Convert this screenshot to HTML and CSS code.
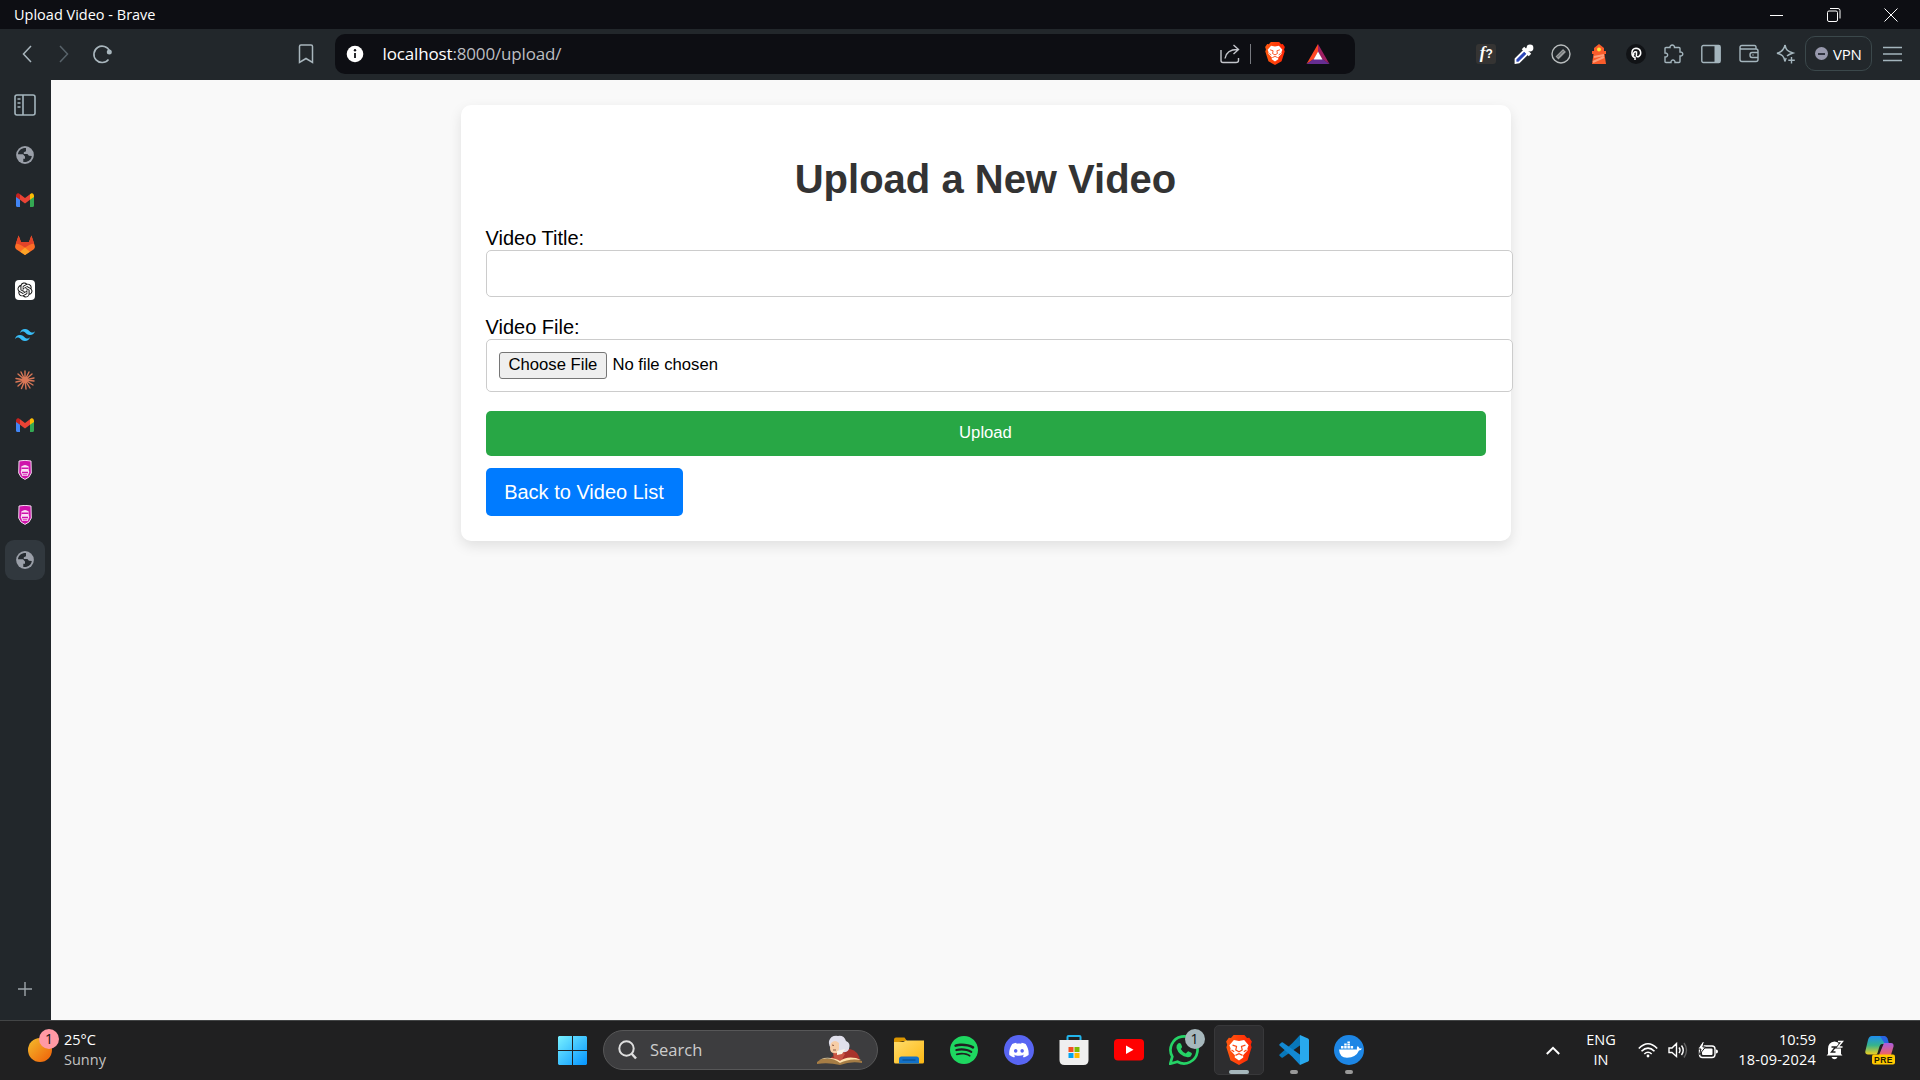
FILE: index.html
```html
<!DOCTYPE html>
<html lang="en">
<head>
<meta charset="utf-8">
<title>Upload Video</title>
<link rel="stylesheet" href="styles.css">
</head>
<body>
<svg class="defs" aria-hidden="true">
  <defs>
    <linearGradient id="g-sun" x1="0" y1="0" x2="1" y2="1"><stop offset="0" stop-color="#f3bd2c"/><stop offset=".8" stop-color="#f0700f"/></linearGradient>
    <linearGradient id="g-win" x1="0" y1="0" x2="30" y2="30" gradientUnits="userSpaceOnUse"><stop offset="0" stop-color="#79f1ff"/><stop offset="1" stop-color="#0091ff"/></linearGradient>
    <linearGradient id="g-folder" x1="0" y1="0" x2="1" y2="1"><stop offset="0" stop-color="#ffdc6b"/><stop offset="1" stop-color="#fdb813"/></linearGradient>
    <linearGradient id="g-brave" x1="0" y1="0" x2="1" y2="0"><stop offset="0" stop-color="#ff5a10"/><stop offset="1" stop-color="#ff2404"/></linearGradient>
    <linearGradient id="g-cop1" x1="0" y1="0" x2="0" y2="1"><stop offset="0" stop-color="#1e8df0"/><stop offset=".5" stop-color="#35b38c"/><stop offset="1" stop-color="#f1cf1f"/></linearGradient>
    <linearGradient id="g-cop2" x1="0" y1="0" x2="0" y2="1"><stop offset="0" stop-color="#a95de0"/><stop offset="1" stop-color="#f2625f"/></linearGradient>
  </defs>
  <symbol id="globe" viewBox="0 0 18 18"><circle cx="9" cy="9" r="8.900" fill="#9a9fa8"/><path d="M10 2C5.500 1.800 2.200 4.600 2 8.300h5l2 2.200v2.300h-1.700v3.100c4.300.8 8-2 8.500-5.900l-2.900-.3-1.500-1.700H7.800V6.200L10 5.300z" fill="#252b30"/></symbol>
  <symbol id="gmail" viewBox="0 0 18 14"><path d="M0 3v9.800c0 .7.500 1.200 1.200 1.200H4V5z" fill="#4285f4"/><path d="M18 3v9.800c0 .7-.5 1.200-1.200 1.200H14V5z" fill="#34a853"/><path d="M4 1.200 9 5l5-3.800v5.600l-5 3.800-5-3.800z" fill="#ea4335"/><path d="M0 3v1l4 2.800V1.200L3 .5C1.700-.5 0 .6 0 3z" fill="#c5221f"/><path d="M18 3v1l-4 2.800V1.200l1-.7c1.300-1 3 .1 3 2.500z" fill="#fbbc04"/></symbol>
  <symbol id="fox" viewBox="0 0 20 20"><path d="M3.600.6 6 7h8L16.400.6 19.700 10.500c.5 1.700 0 2.900-1.200 3.900L10 20 1.500 14.400C.3 13.400-.2 12.200.3 10.500z" fill="#fc6d26"/><path d="M3.600.6 6 7h8L16.400.6l2.800 8c-3.500.4-6.500 2-9.200 4.200-2.700-2.200-5.700-3.800-9.200-4.200z" fill="#e24329"/><path d="m10 12.500 4.800 4.200L10 20l-4.800-3.300z" fill="#fca326"/></symbol>
  <symbol id="claude" viewBox="0 0 20 20"><g stroke="#d97757" stroke-width="1.400" stroke-linecap="round"><path d="M10 10V1M10 10l4-8M10 10l7-6M10 10l9-2M10 10l9 1M10 10l8 5M10 10l5 8M10 10l1 9M10 10l-3.500 8.500M10 10l-7 6M10 10l-9 2M10 10 1 8.500M10 10 3 4M10 10 6 2"/></g></symbol>
  <symbol id="face" viewBox="0 0 14 20"><path d="M1 1Q7-.3 13 1l.3 12L11 17l-4 2.400L3 17 .7 13z" fill="#cf13ab" stroke="#f2d8ee" stroke-width="1"/><path d="M3.300 6.500Q7 3.500 10.700 6.500V10l.6 2-1.600 4H4.300l-1.600-4 .6-2z" fill="#f9dff4"/><path d="M3.500 8.300h7M4 12.500h6" stroke="#cf13ab" stroke-width="1.500"/><path d="M4.800 14.800h4.400" stroke="#cf13ab" stroke-width=".9"/></symbol>
  <symbol id="brave" viewBox="0 0 24 28"><path d="M7 0h10l2.500 2.800 2-.3L24 6l-1 3 .8 2.500L20 23.500 12 28 4 23.500.2 11.500 1 9 0 6l2.500-3.500 2 .3z" fill="url(#g-brave)"/><path d="m7.200 4.700 4.800.8 4.800-.8L21 9.500l-1.200 3 .3 1.800-4.300 4.500L16 21l-4 2.800L8 21l.2-2.200-4.300-4.500.3-1.800L3 9.500z" fill="#fff"/><path d="m6 9.500 3.700 1.200L9 14l3 1.700 3-1.700-.7-3.300L18 9.500M8.700 19l3.300-1.500 3.300 1.500M5 14l2.500 1.700M19 14l-2.500 1.700" fill="none" stroke="#fb4814" stroke-width="1.100"/></symbol>
</svg>

<header class="titlebar">
  <span class="window-title">Upload Video - Brave</span>
  <div class="window-buttons">
    <svg width="14" height="14"><path d="M0 7.500h13" stroke="#fff"/></svg>
    <svg width="14" height="14" fill="none" stroke="#fff"><rect x=".5" y="3" width="10" height="10.500" rx="1.500"/><path d="M3 .5h8q2 0 2 2v8"/></svg>
    <svg width="14" height="14"><path d="m.5.5 13 13M13.500.5l-13 13" stroke="#fff"/></svg>
  </div>
</header>

<nav class="toolbar">
  <div class="nav-buttons">
    <span><svg width="10" height="18" fill="none" stroke="#a9b6bd" stroke-width="1.500"><path d="M9 1 1.500 9 9 17"/></svg></span>
    <span><svg width="10" height="18" fill="none" stroke="#58636a" stroke-width="1.500"><path d="m1 1 7.500 8L1 17"/></svg></span>
    <span><svg width="20" height="20" fill="none" stroke="#a9b6bd" stroke-width="1.600"><path d="M16.500 15.500A8.200 8.200 0 1 1 17.600 7"/><circle cx="17.300" cy="8" r="1.700" fill="#a9b6bd"/></svg></span>
  </div>
  <svg class="bookmark" width="16" height="20" fill="none" stroke="#a9b6bd" stroke-width="1.500"><path d="M3 1h10q1.500 0 1.500 1.500V18.500L8 14.500l-6.500 4V2.500Q1.500 1 3 1z"/></svg>
  <div class="address">
    <svg width="18" height="18"><circle cx="9" cy="9" r="8.300" fill="#fff"/><path d="M9 8v5" stroke="#101116" stroke-width="1.800"/><circle cx="9" cy="5.200" r="1.200" fill="#101116"/></svg>
    <span class="url"><b>localhost</b>:8000/upload/</span>
    <svg class="share" width="20" height="20" fill="none" stroke="#c3c5cb" stroke-width="1.400"><path d="M1 6v10.500q0 2 2 2h13q2.500 0 2.500-2V14M5 14.500C6 8.500 10 5.500 17.500 5.500M13.500 1l5 4.500-5 4.500"/></svg>
    <i class="divider"></i>
    <svg class="shield" width="20" height="23"><use href="#brave"/></svg>
    <svg class="bat" width="24" height="20"><path d="M12 0v8L8 15l-7.500 5z" fill="#ff4724"/><path d="M12 0v8l4 7 7.500 5z" fill="#9e1f63"/><path d="m.5 20 7-5h9l7 5z" fill="#662d91"/><path d="m12 7.500 4.500 8h-9z" fill="#fff"/></svg>
  </div>
  <div class="extensions">
    <span><i class="fx">f<small>?</small></i></span>
    <span><svg width="20" height="20"><path d="m1.500 15 9-9 3.500 3.500-9 9-3.500.5z" fill="#2d47b8" stroke="#fff" stroke-width="1.800"/><path d="m9 4 7 7M12 7l4.500-4.500" stroke="#fff" stroke-width="3.500"/><circle cx="16" cy="4" r="3.400" fill="#fff"/></svg></span>
    <span><svg width="20" height="20"><circle cx="10" cy="10" r="9" fill="none" stroke="#b8bcbd" stroke-width="1.400"/><path d="m6 14 7.500-7.500" stroke="#9b9d9e" stroke-width="4"/><path d="m6.500 13 6-6" stroke="#555c5f"/></svg></span>
    <span><svg width="16" height="20"><path d="M8 0 13 4v3h2v3h-1.500l1.500 10H1l1.500-10H1V7h2V4z" fill="#fa5c2b"/><path d="m3 13 10-2M2 18l11-5" stroke="#ff9d78" stroke-width="2"/><circle cx="8" cy="5.500" r="2" fill="#ffe83b"/></svg></span>
    <span><svg width="20" height="20"><circle cx="10" cy="10" r="10" fill="#111316"/><path d="M9 16V13.500C5 13 4.500 4.500 10 4.300c5 0 6 5.700 3 8-1.500 1.100-3.300.3-2.500-2V8c-2.500-1-4 2-2.300 3.300" fill="none" stroke="#fff" stroke-width="1.500"/></svg></span>
    <span><svg width="20" height="20" fill="none" stroke="#a4b5bd" stroke-width="1.400"><path d="M2 3.500h4c-.5-3.300 5-3.300 4.500 0H15q1 0 1 1V8c3.700-.5 3.700 4.500 0 4v5.500q0 1-1 1h-4c.3-3.300-4.300-3.300-4 0H2q-1 0-1-1V13c3.500.3 3.500-4.300 0-4V4.500q0-1 1-1z"/></svg></span>
    <span><svg width="20" height="20"><rect x=".8" y="1.500" width="18.400" height="17" rx="1.500" fill="none" stroke="#a4b5bd" stroke-width="1.400"/><path d="M13.500 1.500H19v17h-5.500z" fill="#a4b5bd"/></svg></span>
    <span><svg width="20" height="20" fill="none" stroke="#a4b5bd" stroke-width="1.400"><path d="M17 5V3q0-1.500-1.500-1.500H3Q1 1.500 1 3.500v12q0 2 2 2h14q2 0 2-2V7q0-2-2-2H3Q1 5 1 3.500M19 8.500h-6q-2 0-2 2.500t2 2.500h6M13.500 11h1"/></svg></span>
    <span><svg width="20" height="20" fill="none" stroke="#a4b5bd" stroke-width="1.400"><path d="M9 1c1 5 2.500 6.500 8 8-3 1-5 2-6 3M9 17.500C8 12 6 10.500 1 9.300 6 8 8 6 9 1M9 17.500c.5-1.500.7-2.500 1.200-3.500M15.500 13v6.500M12.300 16.200h6.500"/></svg></span>
  </div>
  <div class="vpn"><i></i>VPN</div>
  <svg class="menu" width="19" height="16"><path d="M0 1.500h19M0 8h19M0 14.500h19" stroke="#a4b5bd" stroke-width="1.400"/></svg>
</nav>

<div class="workspace">
  <aside class="sidebar">
    <span class="tab panel-toggle"><svg width="22" height="22" fill="none" stroke="#a4b5bd" stroke-width="1.600"><rect x="1" y="1" width="20" height="20" rx="2"/><path d="M9 1v20M3.500 5h3M3.500 9h3M3.500 13h3"/></svg></span>
    <span class="tab"><svg width="18" height="18"><use href="#globe"/></svg></span>
    <span class="tab"><svg width="18" height="14"><use href="#gmail"/></svg></span>
    <span class="tab"><svg width="20" height="20"><use href="#fox"/></svg></span>
    <span class="tab"><svg width="20" height="20"><rect width="20" height="20" rx="4" fill="#fff"/><path transform="translate(2.500 2.500) scale(.625)" fill="#111" d="M22.2819 9.8211a5.9847 5.9847 0 0 0-.5157-4.9108 6.0462 6.0462 0 0 0-6.5098-2.9A6.0651 6.0651 0 0 0 4.9807 4.1818a5.9847 5.9847 0 0 0-3.9977 2.9 6.0462 6.0462 0 0 0 .7427 7.0966 5.98 5.98 0 0 0 .511 4.9107 6.051 6.051 0 0 0 6.5146 2.9001A5.9847 5.9847 0 0 0 13.2599 24a6.0557 6.0557 0 0 0 5.7718-4.2058 5.9894 5.9894 0 0 0 3.9977-2.9001 6.0557 6.0557 0 0 0-.7475-7.0729zm-9.022 12.6081a4.4755 4.4755 0 0 1-2.8764-1.0408l.1419-.0804 4.7783-2.7582a.7948.7948 0 0 0 .3927-.6813v-6.7369l2.02 1.1686a.071.071 0 0 1 .038.052v5.5826a4.504 4.504 0 0 1-4.4945 4.4944zm-9.6607-4.1254a4.4708 4.4708 0 0 1-.5346-3.0137l.142.0852 4.783 2.7582a.7712.7712 0 0 0 .7806 0l5.8428-3.3685v2.3324a.0804.0804 0 0 1-.0332.0615L9.74 19.9502a4.4992 4.4992 0 0 1-6.1408-1.6464zM2.3408 7.8956a4.485 4.485 0 0 1 2.3655-1.9728V11.6a.7664.7664 0 0 0 .3879.6765l5.8144 3.3543-2.0201 1.1685a.0757.0757 0 0 1-.071 0l-4.8303-2.7865A4.504 4.504 0 0 1 2.3408 7.872zm16.5963 3.8558L13.1038 8.364 15.1192 7.2a.0757.0757 0 0 1 .071 0l4.8303 2.7913a4.4944 4.4944 0 0 1-.6765 8.1042v-5.6772a.79.79 0 0 0-.407-.667zm2.0107-3.0231l-.142-.0852-4.7735-2.7818a.7759.7759 0 0 0-.7854 0L9.409 9.2297V6.8974a.0662.0662 0 0 1 .0284-.0615l4.8303-2.7866a4.4992 4.4992 0 0 1 6.6802 4.66zM8.3065 12.863l-2.02-1.1638a.0804.0804 0 0 1-.038-.0567V6.0742a4.4992 4.4992 0 0 1 7.3757-3.4537l-.142.0805L8.704 5.459a.7948.7948 0 0 0-.3927.6813zm1.0976-2.3654l2.602-1.4998 2.6069 1.4998v2.9994l-2.5974 1.4997-2.6067-1.4997Z"/></svg></span>
    <span class="tab"><svg width="20" height="20" viewBox="0 0 24 24" fill="#38bdf8"><path d="M12.001 4.800c-3.200 0-5.200 1.600-6 4.800 1.200-1.600 2.600-2.200 4.200-1.800.913.228 1.565.89 2.288 1.624C13.666 10.618 15.027 12 18.001 12c3.200 0 5.200-1.600 6-4.800-1.200 1.600-2.600 2.200-4.200 1.800-.913-.228-1.565-.89-2.288-1.624C16.337 6.182 14.976 4.800 12.001 4.800zM6.001 12c-3.200 0-5.200 1.600-6 4.800 1.200-1.600 2.600-2.200 4.200-1.800.913.228 1.565.89 2.288 1.624 1.177 1.194 2.538 2.576 5.512 2.576 3.200 0 5.200-1.600 6-4.800-1.200 1.600-2.600 2.200-4.200 1.800-.913-.228-1.565-.89-2.288-1.624C10.337 13.382 8.976 12 6.001 12z"/></svg></span>
    <span class="tab"><svg width="20" height="20"><use href="#claude"/></svg></span>
    <span class="tab"><svg width="18" height="14"><use href="#gmail"/></svg></span>
    <span class="tab"><svg width="14" height="20"><use href="#face"/></svg></span>
    <span class="tab"><svg width="14" height="20"><use href="#face"/></svg></span>
    <span class="tab active"><svg width="18" height="18"><use href="#globe"/></svg></span>
    <svg class="new-tab" width="14" height="14"><path d="M7 0v14M0 7h14" stroke="#9da5aa" stroke-width="1.400"/></svg>
  </aside>

  <main class="page">
    <section class="card">
      <h1>Upload a New Video</h1>
      <form>
        <label for="title">Video Title:</label>
        <input class="field" type="text" id="title">
        <label for="file">Video File:</label>
        <input class="field file" type="file" id="file">
        <button class="submit" type="button">Upload</button>
      </form>
      <a class="back" href="#">Back to Video List</a>
    </section>
  </main>
</div>

<footer class="taskbar">
  <div class="weather">
    <div class="sun"><svg width="24" height="24"><circle cx="12" cy="12" r="12" fill="url(#g-sun)"/></svg><span class="badge pink">1</span></div>
    <div class="weather-text"><span>25°C</span><span class="dim">Sunny</span></div>
  </div>
  <div class="apps">
    <svg class="start" width="29" height="29" fill="url(#g-win)"><path d="M1 0h13v14H0V1zM15 0h13l1 1v13H15zM0 15h14v14H1l-1-1zM15 15h14v13l-1 1H15z"/></svg>
    <div class="search">
      <svg width="19" height="20" fill="none" stroke="#dedede" stroke-width="2"><circle cx="8.500" cy="8.500" r="7.200"/><path d="m13.500 13.500 4.500 5" stroke-width="2.500"/></svg>
      <span>Search</span>
      <svg class="reader" width="46" height="32"><path d="M17 22q6-8 16-7 9 2 10 12H13q0-4 4-5z" fill="#a8322b"/><path d="M16 18q7-3 12 2l-5 9q-7-3-7-11z" fill="#c95643"/><path d="M12 7q2-6 9-5 6-1 8 5 5 2 3 8-2 4-7 3-5 3-9-2-5-4-4-9z" fill="#e0dfeb"/><path d="M14 9q4-4 8 0v6q-1 5-5 4-4 0-4-5z" fill="#f6cda6"/><path d="m15 11 2 .5M16 16h3" stroke="#8c5640"/><path d="m20 17 8-2-3 5-5 1z" fill="#f9f4e4"/><path d="M0 28q5-5 10-3h8l5 4 5-3q11-2 17 1v2q-11-2-22 2-12-3-23-1z" fill="#a67d45"/><path d="M2 26q12-4 21 3 9-5 21-3l-5-2q-10-2-16 3-7-4-16-3z" fill="#ffe3ac"/></svg>
    </div>
    <div class="app"><svg width="30" height="27"><path d="M0 2.500Q0 .5 2 .5h8.500L13 4h-3L0 6z" fill="#dc9600"/><path d="M0 5h9l3-1.500h18v21.500q0 1.500-1.500 1.500h-27Q0 26.500 0 25z" fill="url(#g-folder)"/><path d="M5 26.500V22q0-2.500 2.500-2.500h15Q25 19.500 25 22v4.500z" fill="#1271c9"/><path d="M8.500 23h13" stroke="#074981"/></svg></div>
    <div class="app"><svg width="28" height="28" viewBox="0 0 24 24" fill="#1ed760"><path d="M12 0C5.400 0 0 5.400 0 12s5.400 12 12 12 12-5.400 12-12S18.660 0 12 0zm5.521 17.340c-.24.359-.66.480-1.021.240-2.820-1.740-6.360-2.101-10.561-1.141-.418.122-.779-.179-.899-.539-.12-.421.180-.78.540-.9 4.560-1.021 8.520-.6 11.640 1.320.42.180.479.659.301 1.020zm1.440-3.300c-.301.420-.841.600-1.262.300-3.239-1.980-8.159-2.580-11.939-1.380-.479.120-1.020-.12-1.140-.6-.12-.48.120-1.021.600-1.141C9.600 9.900 15 10.561 18.720 12.840c.361.181.540.780.241 1.200zm.12-3.360C15.240 8.400 8.820 8.160 5.160 9.301c-.6.179-1.200-.181-1.380-.721-.18-.601.180-1.200.720-1.381 4.260-1.260 11.280-1.020 15.721 1.621.539.300.719 1.020.419 1.560-.299.421-1.020.599-1.559.300z"/></svg></div>
    <div class="app"><svg width="30" height="30"><circle cx="15" cy="15" r="15" fill="#5865f2"/><path transform="translate(5.200 5.400) scale(.81)" fill="#fff" d="M20.317 4.370a19.800 19.800 0 0 0-4.885-1.515c-.3.400-.5.900-.687 1.287-1.845-.276-3.680-.276-5.487 0-.16-.4-.4-.88-.696-1.287A19.700 19.700 0 0 0 3.677 4.370C.533 9.046-.319 13.580.099 18.058c2.080 1.560 4.070 2.480 6.024 3.086.5-.66.950-1.320 1.310-2.050-.7-.26-1.310-.56-1.922-.998l.442-.34c3.928 1.793 8.180 1.793 12.061 0l.451.342c-.59.420-1.220.720-1.873.970.360.740.770 1.430 1.310 2.076 1.960-.606 3.950-1.520 6.033-3.086.5-5.177-.838-9.674-3.618-13.688zM8.020 15.331c-1.183 0-2.157-1.086-2.157-2.419s.956-2.419 2.157-2.419c1.210 0 2.176 1.095 2.157 2.419 0 1.333-.956 2.419-2.157 2.419zm7.975 0c-1.183 0-2.157-1.086-2.157-2.419s.955-2.419 2.157-2.419c1.210 0 2.176 1.095 2.157 2.419 0 1.333-.946 2.419-2.157 2.419z"/></svg></div>
    <div class="app"><svg width="30" height="30"><path d="M8.500 6V2q0-1 1-1h11q1 0 1 1v4" fill="none" stroke="#22b5ec" stroke-width="2"/><path d="M.5 5h29v20q0 5-5 5h-19q-5 0-5-5z" fill="#efefef"/><path d="M9.500 12h5v5h-5z" fill="#f25022"/><path d="M15.500 12h5v5h-5z" fill="#7fba00"/><path d="M9.500 18h5v5h-5z" fill="#00a4ef"/><path d="M15.500 18h5v5h-5z" fill="#ffb900"/></svg></div>
    <div class="app"><svg width="30" height="22"><rect width="30" height="21.500" rx="4" fill="#f00"/><path d="m12 6.500 7.500 4.300-7.500 4.300z" fill="#fff"/></svg></div>
    <div class="app"><svg width="30" height="30"><path d="m1.300 28.700 2-7A13.500 13.500 0 1 1 8.500 26.800z" fill="none" stroke="#25d366" stroke-width="2.700"/><path d="M9 8.500q2-1.200 3 .5l1 2.500q.2 1-1.200 2.500 1.700 3.200 5 4.500l1.700-1.800q.5-.6 1.300-.2l2.500 1.200q1 .5.400 2-1 2.700-4 2.500Q10 21 7.500 13q-.4-3 1.500-4.500z" fill="#25d366"/></svg><span class="badge gray">1</span></div>
    <div class="app running current"><svg width="26" height="30"><use href="#brave"/></svg></div>
    <div class="app running"><svg width="30" height="30"><path d="m21 0-8 8.500L.5 19.500q-.5.700 0 1.300L2.500 22.500q.7.400 1.400 0L23 9z" fill="#0877b9"/><path d="M2.500 7.500q.7-.4 1.400 0L23 21l-2 9L13 21.500.5 10.500q-.5-.7 0-1.300z" fill="#1389d3"/><path d="m21 0 8 3.500q1 .5 1 1.500v20q0 1-1 1.500L21 30z" fill="#28a9ee"/></svg></div>
    <div class="app running"><svg width="30" height="30"><circle cx="15" cy="15" r="15" fill="#1d86e5"/><path d="M5 14.500h18q-.7-2 .7-3.500 1.500 1 1.800 2.500h2.500q-.8 2-3 2Q22 22.500 13 22.700q-7.500 0-8-8.200z" fill="#fff"/><path d="M7 11h2.500v2.500H7zM10.200 11h2.500v2.500h-2.500zM13.400 11h2.500v2.500h-2.500zM16.600 11h2.500v2.500h-2.500zM10.200 8.500h2.500v2h-2.500zM13.400 8.500h2.500v2h-2.500zM13.400 6.500h2.500v1.500h-2.500z" fill="#fff"/></svg></div>
  </div>
  <div class="tray">
    <svg class="chevron" width="14" height="9" fill="none" stroke="#fff" stroke-width="2"><path d="m.8 8 6.200-6.200L13.200 8"/></svg>
    <div class="lang"><span>ENG</span><span>IN</span></div>
    <svg class="wifi" width="20" height="16" fill="none" stroke="#fff" stroke-width="1.600"><path d="M.8 6.500q9.200-9.500 18.400 0M3.500 9.300q6.500-6.500 13 0M6.300 12q3.700-3.500 7.400 0"/><circle cx="10" cy="14" r="1.400" fill="#fff" stroke="none"/></svg>
    <svg class="sound" width="20" height="17" fill="none" stroke="#fff" stroke-width="1.400"><path d="M1 6h3l4.500-4.500v13L4 10.500H1zM11 5.500q2 2.700 0 5.500M13.500 3.500q3.500 4.700 0 9.500"/><path d="M16 1q5 7 0 14.500" stroke="#626262"/></svg>
    <svg class="battery" width="20" height="17"><rect x="1.500" y="4" width="15.500" height="11.500" rx="3" fill="none" stroke="#fff" stroke-width="1.400"/><rect x="4" y="6.500" width="10.500" height="6.500" rx="1" fill="#fff"/><path d="M18 7.500q2 0 2 2t-2 2z" fill="#fff"/><path d="M5-1-.2 7H3l-1.500 5.500L7.500 5H4.800L6.500-1z" fill="#fff" stroke="#202021"/></svg>
    <div class="clock"><span>10:59</span><span class="date">18-09-2024</span></div>
    <svg class="bell" width="18" height="20"><path d="M2 14V9q0-7 6.500-7.500Q15 2 15 9v5l1.500 1.500H.5z" fill="#fff"/><path d="M5.500 17h6q-1 2.300-3 2.300t-3-2.300z" fill="#fff"/><path d="M5.500 7h4l-4 5h4" fill="none" stroke="#202021" stroke-width="1.400"/><path d="M12 2h4.500L12 7h4.500" fill="none" stroke="#202021" stroke-width="3"/><path d="M12 1.500h4.500L12 7h4.500" fill="none" stroke="#fff" stroke-width="1.400"/></svg>
    <svg class="copilot" width="30" height="30"><path d="M7 1h11q3 0 4 4l1 4h-6q-2 0-3 4l-1.500 5q-.5 1.500-2 1.500H3q-3.500 0-2.500-4L3 5Q4 1 7 1z" fill="url(#g-cop1)"/><path d="M15 1h4q3 0 4 4l1 4h-4z" fill="#2864e3"/><path d="M19 8h7q3 0 2.500 3.500L26 20H14z" fill="url(#g-cop2)"/><rect x="7" y="19.500" width="23" height="10" rx="2" fill="#ffc800"/><text x="18.500" y="27.800" class="pre">PRE</text></svg>
  </div>
</footer>
</body>
</html>
```
FILE: styles.css
```css
* { box-sizing: border-box; }

body {
  margin: 0;
  width: 1920px;
  height: 1080px;
  overflow: hidden;
  display: flex;
  flex-direction: column;
  font-family: "Open Sans", "Noto Sans", sans-serif;
  background: #22272b;
  color: #fff;
}

svg { display: block; flex: none; }
.defs { position: absolute; width: 0; height: 0; }

/* Window title bar */
.titlebar {
  height: 29px;
  flex: none;
  background: #0d0e13;
  display: flex;
  align-items: center;
  justify-content: space-between;
  padding: 0 22px 0 14px;
}
.window-title { font-size: 14.5px; letter-spacing: 0; white-space: nowrap; }
.window-buttons { display: flex; gap: 43px; }

/* Browser toolbar */
.toolbar {
  height: 51px;
  flex: none;
  display: flex;
  align-items: center;
  padding: 0 17px 2px 8px;
}
.nav-buttons, .extensions { display: flex; }
.nav-buttons span, .extensions span { width: 37.5px; display: flex; justify-content: center; align-items: center; }
.bookmark { margin-left: 177px; }
.address {
  width: 1020px;
  height: 40px;
  margin-left: 21px;
  padding-left: 11px;
  border-radius: 10px;
  background: #0d0e13;
  display: flex;
  align-items: center;
}
.url { margin-left: 19px; font-size: 17px; color: #bcbdc1; white-space: nowrap; width: 189px; letter-spacing: -.15px; }
.url b { font-weight: 400; color: #fff; }
.share { margin-left: 648px; }
.divider { width: 1px; height: 20px; margin-left: 10px; background: #777a80; }
.shield { margin-left: 14px; }
.bat { margin-left: 21px; }
.extensions { margin-left: 113px; }
.fx {
  width: 20px;
  height: 20px;
  border-radius: 3px;
  background: #353433;
  font: italic bold 17px/18px "Liberation Serif", serif;
  text-align: center;
}
.fx small { font: bold 12px "Liberation Sans", sans-serif; }
.vpn {
  width: 67px;
  height: 35px;
  border: 1px solid #3b484b;
  border-radius: 10px;
  display: flex;
  align-items: center;
  gap: 5px;
  padding-left: 9px;
  font-size: 15px;
  letter-spacing: -.2px;
}
.vpn i { width: 13px; height: 13px; border-radius: 50%; background: #9899ad; display: flex; align-items: center; justify-content: center; }
.vpn i::after { content: ""; width: 7px; height: 2px; background: #303440; }
.menu { margin-left: 11px; }

/* Sidebar with vertical tabs */
.workspace { height: 940px; flex: none; display: flex; }
.sidebar { width: 51px; padding: 5px 0 24px 5px; display: flex; flex-direction: column; gap: 5px; }
.tab { width: 40px; height: 40px; border-radius: 9px; display: flex; align-items: center; justify-content: center; }
.panel-toggle { margin-bottom: 5px; }
.active { background: #31383e; }
.new-tab { margin: auto 0 0 13px; }

/* Page content */
.page { flex: 1; background: #f9f9f9; padding-top: 25px; font: 20px/23px "Liberation Sans", Arial, sans-serif; color: #000; }
.card {
  width: 1050px;
  height: 436px;
  margin: 0 auto;
  padding: 25px;
  background: #fff;
  border-radius: 10px;
  box-shadow: 0 5px 12.5px rgba(0, 0, 0, .1);
}
.card h1 { margin: 26px 0 25px; font-size: 40px; line-height: 46px; text-align: center; color: #333; }
.card label { display: block; }
.field {
  display: block;
  width: 1027px;
  height: 47px;
  margin: 0 0 19px;
  padding: 12px;
  border: 1px solid #ccc;
  border-radius: 5px;
  background: #fff;
  font: 16.67px "Liberation Sans", Arial, sans-serif;
  color: #000;
}
.file { height: 53px; }
.file::file-selector-button {
  height: 27px;
  margin: 0 5px 0 0;
  padding: 0 9px 2px;
  border: 1px solid #767676;
  border-radius: 3px;
  background: #efefef;
  font: 16.67px "Liberation Sans", Arial, sans-serif;
  color: #000;
}
.submit {
  display: block;
  width: 1000px;
  height: 45px;
  padding: 0 0 2px;
  border: 0;
  border-radius: 5px;
  background: #28a745;
  color: #fff;
  font: 16.67px "Liberation Sans", Arial, sans-serif;
}
.back {
  display: block;
  width: 197px;
  height: 48px;
  margin-top: 12px;
  border-radius: 5px;
  background: #007bff;
  color: #fff;
  line-height: 48px;
  text-align: center;
  text-decoration: none;
}

/* Taskbar */
.taskbar {
  height: 60px;
  flex: none;
  display: flex;
  align-items: center;
  padding-bottom: 1px;
  border-top: 1px solid #434546;
  background: #202021;
  font-size: 14.5px;
  line-height: 20px;
}
.weather { display: flex; width: 558px; padding-left: 28px; align-items: center; }
.sun { position: relative; }
.weather-text { margin-left: 12px; display: flex; flex-direction: column; }
.dim { color: #c3c3c3; }
.badge {
  position: absolute;
  width: 20px;
  height: 20px;
  border-radius: 50%;
  color: #111;
  text-align: center;
  font-size: 14px;
}
.pink { background: #ff99a4; left: 11px; top: -9px; }
.gray { background: #a6b7bc; left: 26px; top: 4px; }
.apps { display: flex; align-items: center; }
.search {
  width: 275px;
  height: 40px;
  margin: 0 3px 0 16px;
  padding-left: 14px;
  border: 1px solid #575758;
  border-radius: 20px;
  background: #3d3d3f;
  display: flex;
  align-items: center;
  font-size: 16.5px;
  color: #ccc;
}
.search span { margin-left: 13px; width: 167px; }
.app { position: relative; width: 50px; height: 50px; margin: 0 2.5px; display: flex; align-items: center; justify-content: center; border-radius: 5px; }
.current { background: #2d2d2f; border: 1px solid #38383a; }
.running::after { content: ""; position: absolute; left: 21px; bottom: 1px; width: 8px; height: 4px; border-radius: 2px; background: #999; }
.current::after { left: 14px; bottom: 0; width: 20px; background: #a6b7bc; }
.tray { flex: 1; display: flex; align-items: center; }
.chevron { margin-left: 170px; }
.lang { width: 40px; margin-left: 21px; display: flex; flex-direction: column; align-items: center; }
.wifi { margin-left: 17px; }
.sound { margin-left: 10px; }
.battery { margin-left: 10px; }
.clock { width: 98px; display: flex; flex-direction: column; align-items: flex-end; }
.date { letter-spacing: .2px; }
.bell { margin-left: 10px; }
.copilot { margin-left: 21px; }
.pre { font: bold 8.5px "Liberation Sans", sans-serif; text-anchor: middle; fill: #221b00; letter-spacing: .5px; }
```
